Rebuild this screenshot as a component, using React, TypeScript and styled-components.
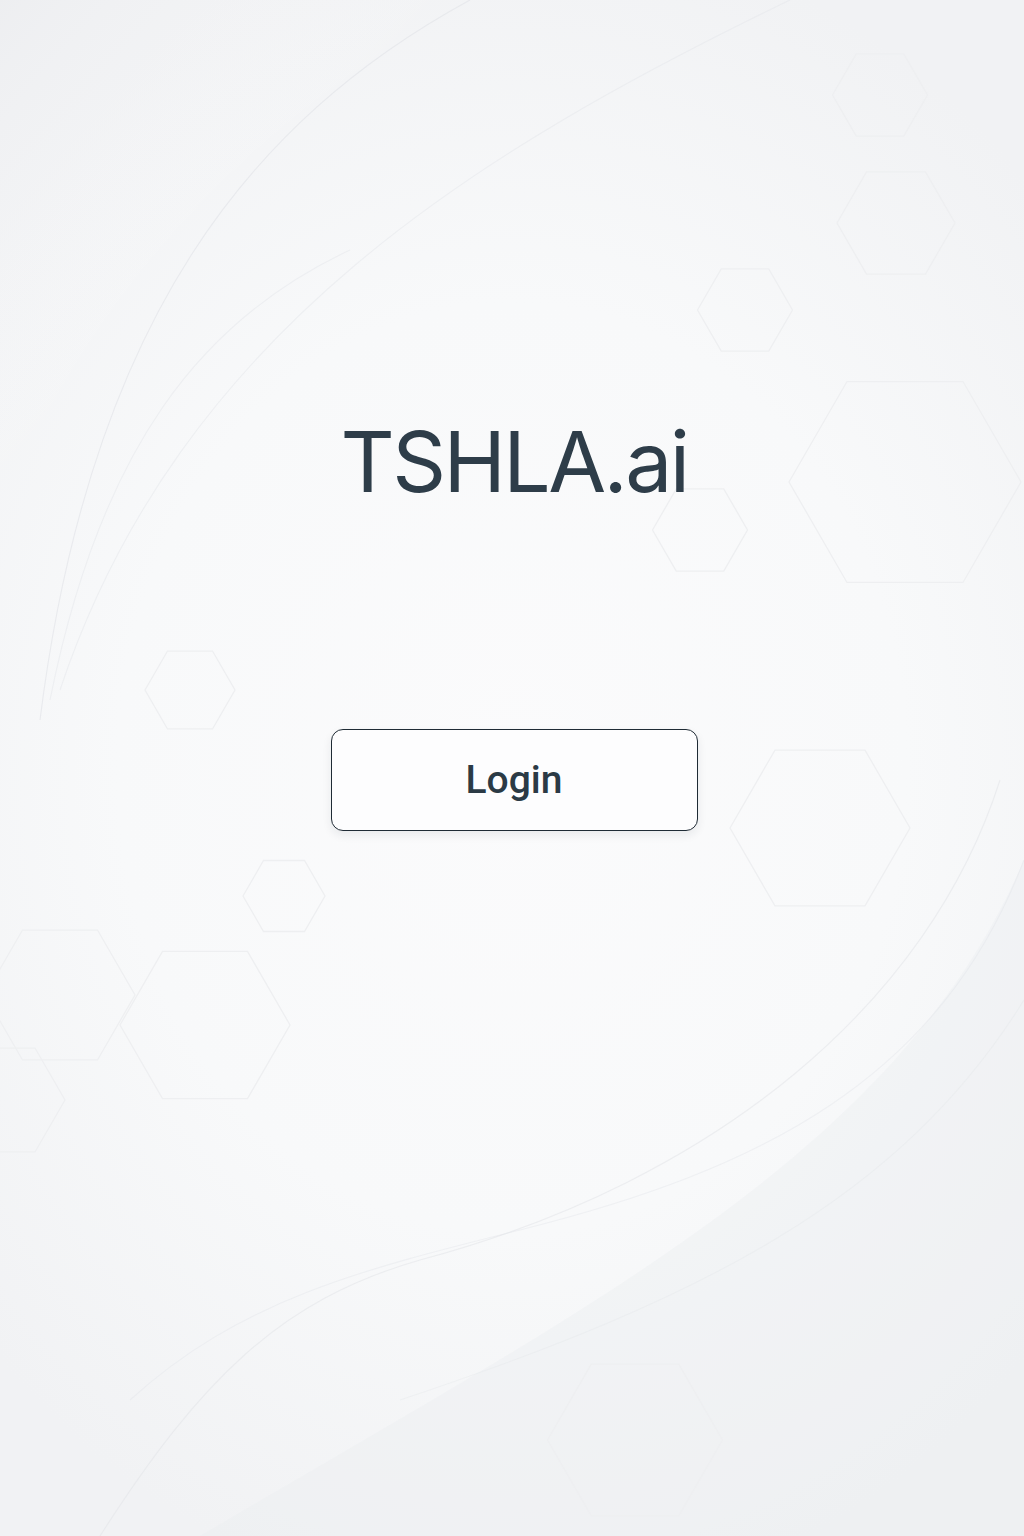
import React from "react";
import styled, { createGlobalStyle } from "styled-components";

const Global = createGlobalStyle`
  html, body { margin: 0; padding: 0; }
  body { background: #f6f7f9; font-family: Inter, "Noto Sans", "Liberation Sans", sans-serif; }
`;

const Page = styled.div`
  position: relative;
  width: 1024px;
  height: 1536px;
  overflow: hidden;
  background: radial-gradient(ellipse 70% 55% at 50% 50%, #fbfbfc 0%, #f8f9fa 55%, #f1f2f4 100%);
  display: flex;
  flex-direction: column;
  align-items: center;
`;

const Backdrop = styled.svg`
  position: absolute;
  inset: 0;
  width: 100%;
  height: 100%;
  pointer-events: none;
`;

const Content = styled.main`
  position: relative;
  display: flex;
  flex-direction: column;
  align-items: center;
  padding-top: 410px;
  padding-left: 4px;
`;

const Title = styled.h1`
  margin: 0;
  font-family: Inter, "Liberation Sans", sans-serif;
  font-weight: 400;
  font-size: 84px;
  line-height: 104px;
  letter-spacing: -2.6px;
  color: #2e3d49;
`;

const LoginButton = styled.button`
  margin-top: 215px;
  width: 367px;
  height: 102px;
  border: 1.5px solid #1f2b35;
  border-radius: 12px;
  background: #fdfdfe;
  box-shadow: 0 4px 10px rgba(30, 40, 55, 0.08);
  font-family: Roboto, Inter, "Liberation Sans", sans-serif;
  font-weight: 500;
  font-size: 39px;
  color: #2b3a45;
  cursor: pointer;
  padding: 0;
`;

const hex = (cx: number, cy: number, w: number) => {
  const r = w / 2;
  const h = (r * Math.sqrt(3)) / 2;
  return [
    [cx - r, cy],
    [cx - r / 2, cy - h],
    [cx + r / 2, cy - h],
    [cx + r, cy],
    [cx + r / 2, cy + h],
    [cx - r / 2, cy + h],
  ]
    .map((p) => p.join(","))
    .join(" ");
};

const hexes: [number, number, number][] = [
  [896, 223, 118],
  [905, 482, 232],
  [745, 310, 95],
  [700, 530, 95],
  [820, 828, 180],
  [284, 896, 82],
  [205, 1025, 170],
  [60, 995, 150],
  [5, 1100, 120],
  [635, 1440, 175],
  [880, 95, 95],
  [190, 690, 90],
];

export default function App() {
  return (
    <Page>
      <Global />
      <Backdrop viewBox="0 0 1024 1536" preserveAspectRatio="none">
        <defs>
          <linearGradient id="sheen" x1="0" y1="0" x2="1" y2="1">
            <stop offset="0" stopColor="#e9eaed" stopOpacity="0.8" />
            <stop offset="0.5" stopColor="#ffffff" stopOpacity="0" />
          </linearGradient>
        </defs>
        <path d="M0 0 L470 0 C 250 120, 80 300, 0 520 Z" fill="url(#sheen)" opacity="0.6" />
        <path d="M1024 1536 L1024 860 C 900 1150, 600 1300, 200 1536 Z" fill="#eceef1" opacity="0.4" />
        <g fill="none" stroke="#e2e4e8" strokeWidth="1.1">
          <path d="M470 0 C 250 120, 90 320, 40 720" opacity="0.65" />
          <path d="M790 0 C 480 150, 180 330, 60 690" opacity="0.45" />
          <path d="M350 250 C 200 320, 100 450, 50 700" opacity="0.45" />
          <path d="M1000 780 C 930 1000, 720 1180, 420 1260 C 280 1300, 200 1380, 100 1536" opacity="0.55" />
          <path d="M1024 860 C 940 1080, 760 1170, 520 1230 C 360 1270, 240 1300, 130 1400" opacity="0.4" />
          <path d="M1024 1000 C 900 1200, 700 1300, 400 1400" opacity="0.35" />
        </g>
        <g fill="none" stroke="#eeeff1" strokeWidth="1.3">
          {hexes.map(([x, y, w], i) => (
            <polygon key={i} points={hex(x, y, w)} />
          ))}
        </g>
      </Backdrop>
      <Content>
        <Title>TSHLA.ai</Title>
        <LoginButton>Login</LoginButton>
      </Content>
    </Page>
  );
}
